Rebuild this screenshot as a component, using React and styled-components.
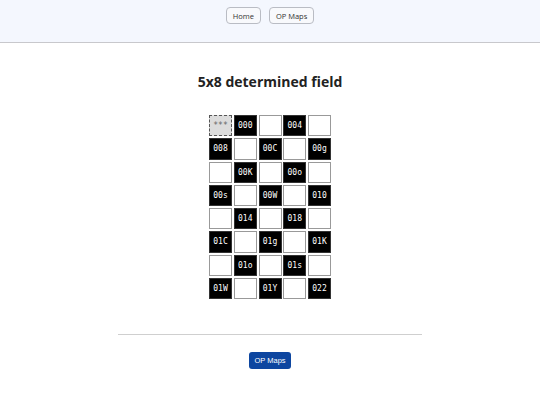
import styled, { createGlobalStyle } from 'styled-components';

const GlobalStyle = createGlobalStyle`
  body {
    margin: 0;
    background: #ffffff;
    font-family: "Open Sans", "Noto Sans", sans-serif;
  }
`;

const Header = styled.header`
  height: 43px;
  background: #f4f7fe;
  border-bottom: 1px solid #c8c8cc;
  display: flex;
  justify-content: center;
  align-items: flex-start;
  gap: 8px;
  padding-top: 7px;
  box-sizing: border-box;
`;

const NavButton = styled.a`
  display: inline-flex;
  align-items: center;
  height: 15px;
  padding: 0 6px;
  border: 1px solid #b9bcc4;
  border-radius: 4px;
  background: #f8f9fc;
  color: #333;
  font-size: 7.5px;
  text-decoration: none;
`;

const Main = styled.main`
  width: 304px;
  margin: 0 auto;
  display: flex;
  flex-direction: column;
  align-items: center;
`;

const Title = styled.h1`
  margin: 29px 0 0;
  font-size: 14px;
  font-weight: 700;
  color: #222;
  line-height: 20px;
`;

const Field = styled.div`
  margin-top: 23px;
  display: grid;
  grid-template-columns: repeat(5, 23px);
  grid-auto-rows: 21.25px;
  gap: 2px 1.75px;
`;

const Cell = styled.div`
  box-sizing: border-box;
  display: flex;
  align-items: center;
  justify-content: center;
  font-family: "DejaVu Sans Mono", "Liberation Mono", monospace;
  font-size: 8px;
  border: 1px solid ${p => (p.$dark ? '#333' : '#999')};
  background: ${p => (p.$dark ? '#000' : '#fff')};
  color: #fff;
`;

const StartCell = styled(Cell)`
  border: 1px dashed #555;
  background: #dcdcdc;
  color: #666;
`;

const Divider = styled.hr`
  width: 100%;
  margin: 35px 0 0;
  border: none;
  border-top: 1px solid #cfcfcf;
`;

const MapsButton = styled.a`
  margin: 17px 0 0;
  display: inline-flex;
  align-items: center;
  height: 17px;
  padding: 0 5px;
  border-radius: 3px;
  background: #0d46a0;
  color: #fff;
  font-family: "Liberation Sans", Arial, sans-serif;
  font-size: 7.5px;
  text-decoration: none;
`;

const labels = [
  '000', '004', '008', '00C', '00g', '00K', '00o', '00s', '00W', '010',
  '014', '018', '01C', '01g', '01K', '01o', '01s', '01W', '01Y', '022'
];

const App = () => {
  let next = 0;
  const cells = [];
  for (let r = 0; r < 8; r++) {
    for (let c = 0; c < 5; c++) {
      const key = `${r}-${c}`;
      if (r === 0 && c === 0) {
        cells.push(<StartCell key={key}>***</StartCell>);
      } else if ((r + c) % 2 === 1) {
        cells.push(<Cell key={key} $dark>{labels[next++]}</Cell>);
      } else {
        cells.push(<Cell key={key} />);
      }
    }
  }

  return (
    <>
      <GlobalStyle />
      <Header>
        <NavButton href="#">Home</NavButton>
        <NavButton href="#">OP Maps</NavButton>
      </Header>
      <Main>
        <Title>5x8 determined field</Title>
        <Field>{cells}</Field>
        <Divider />
        <MapsButton href="#">OP Maps</MapsButton>
      </Main>
    </>
  );
};

export default App;
